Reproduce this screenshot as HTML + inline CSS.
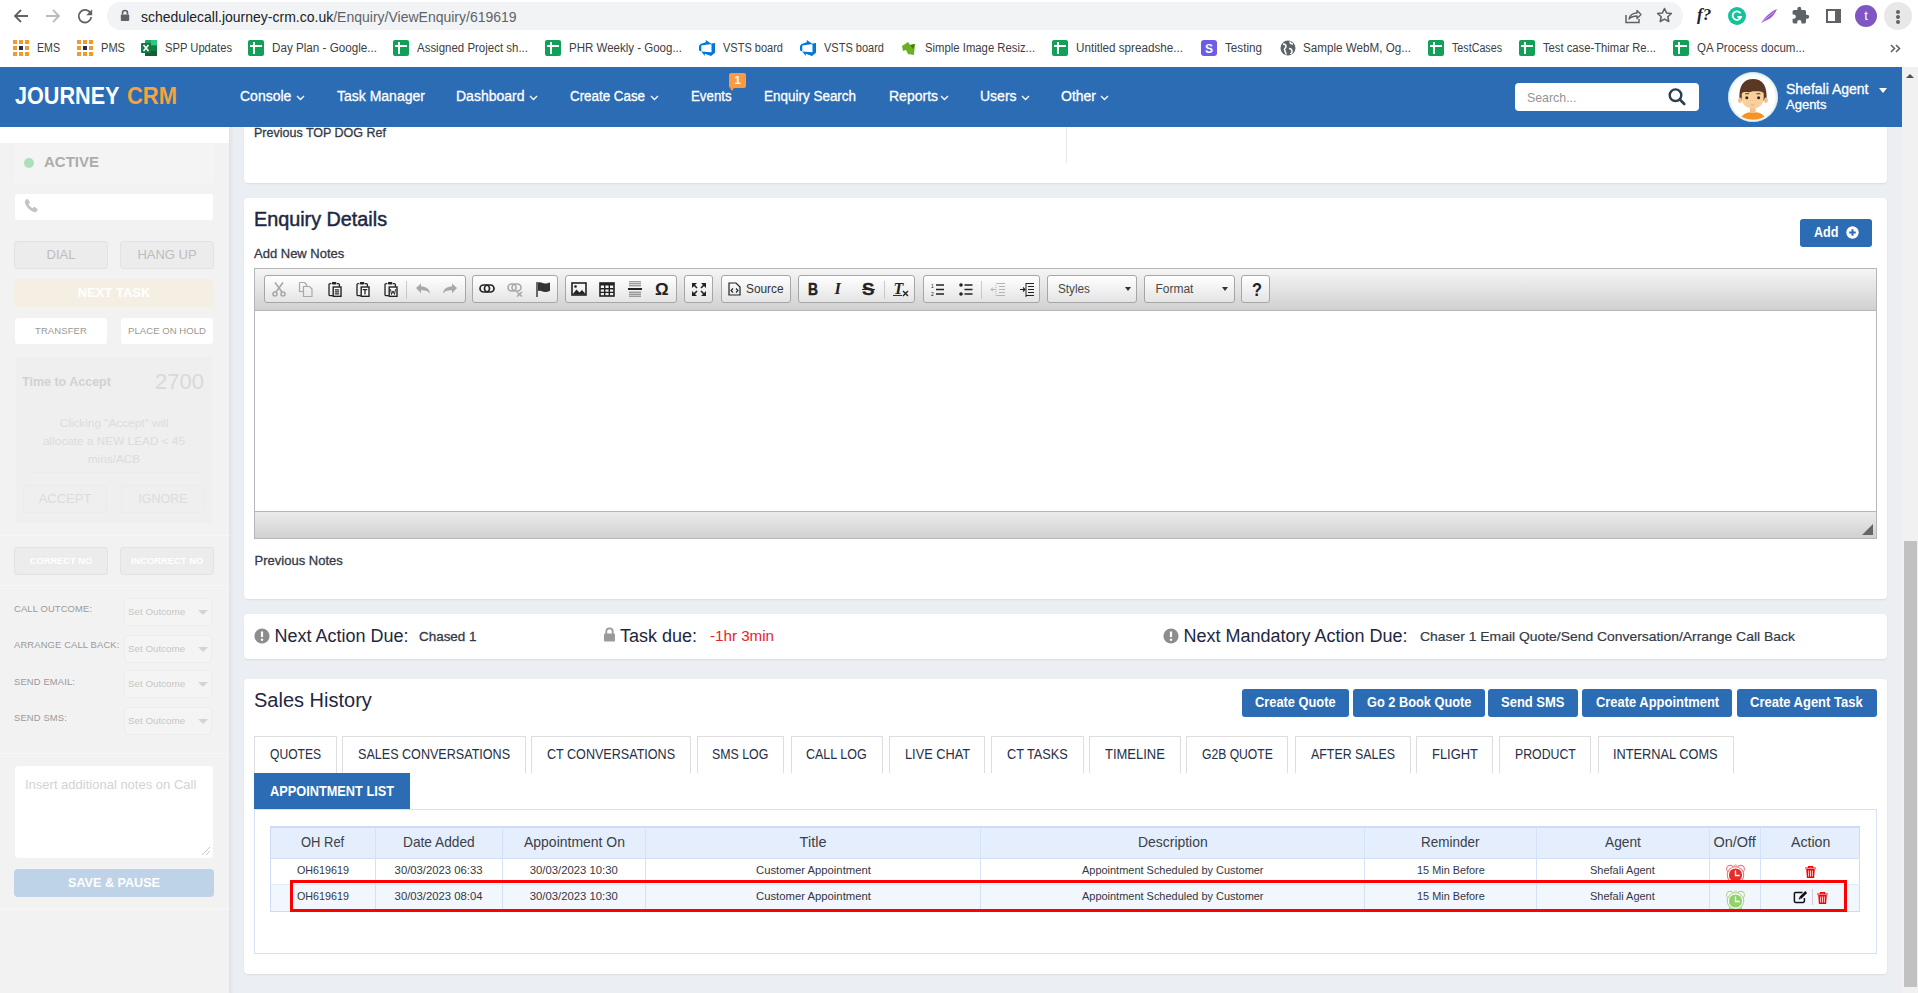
<!DOCTYPE html>
<html><head><meta charset="utf-8">
<style>
*{box-sizing:border-box;margin:0;padding:0}
html,body{width:1918px;height:993px;overflow:hidden;background:#ebeef3;font-family:"Liberation Sans",sans-serif;position:relative}
.abs{position:absolute}
#chrome{left:0;top:0;width:1918px;height:33px;background:#fff}
#bm{left:0;top:33px;width:1918px;height:34px;background:#fff}
.bmt{top:7px;font-size:12px;line-height:16px;color:#3c4043;white-space:nowrap;transform-origin:left center}
#nav{left:0;top:67px;width:1902px;height:60px;background:#2b6cb4}
.nvt{top:21px;font-size:14px;line-height:17px;color:#fff;white-space:nowrap;-webkit-text-stroke:.3px #fff}
.chev{top:28px}
#sb{left:1902px;top:67px;width:16px;height:926px;background:#f1f1f1}
#side{left:0;top:127px;width:229px;height:866px;background:#f2f2f2}
#sideshadow{left:229px;top:127px;width:5px;height:866px;background:linear-gradient(to right,#dfe2e7,#ebeef3)}
.card{position:absolute;left:244px;width:1643px;background:#fff;border-radius:4px;box-shadow:0 1px 2px rgba(0,0,0,.08)}
.sbtn{background:#ececec;border:1px solid #e2e2e2;border-radius:3px;color:#bdbdbd;text-align:center;line-height:26px}
.slbl{left:14px;font-size:9.4px;line-height:12px;color:#9a9a9a;letter-spacing:.15px;white-space:nowrap}
.ssel{left:124px;width:88px;height:28px;background:#f4f4f4;border:1px solid #ededed;border-radius:3px;font-size:9.8px;line-height:26px;color:#c7c7c7;padding-left:3px}
.ssel:after{content:"";position:absolute;left:73px;top:11px;border-left:5px solid transparent;border-right:5px solid transparent;border-top:5px solid #d4d4d4}
.t{white-space:nowrap;transform-origin:left center}
.tbg{border:1px solid #a6a6a6;border-radius:3px;background:linear-gradient(#fff,#e4e4e4)}
</style></head><body>
<div id="side" class="abs">
 <div class="abs" style="left:0;top:0;width:229px;height:16px;background:#fff"></div>
 <div class="abs" style="left:14px;top:16px;width:200px;height:40px;background:#f4f4f4"></div>
 <div class="abs" style="left:24px;top:31px;width:10px;height:10px;border-radius:50%;background:#ace0bb"></div>
 <div class="abs" style="left:44px;top:25.5px;font-size:15px;line-height:18px;font-weight:700;color:#acacac">ACTIVE</div>
 <div class="abs" style="left:15px;top:67px;width:198px;height:26px;background:#fff;border-radius:3px"></div>
 <svg class="abs" style="left:23px;top:71px" width="16" height="16" viewBox="0 0 16 16"><path d="M3.6 1.2c.5-.3 1.1-.2 1.5.3l1.6 2.3c.3.5.2 1.1-.2 1.4l-1 .8c.8 1.8 2.3 3.4 4.2 4.3l.8-1c.4-.4 1-.5 1.4-.2l2.3 1.6c.5.3.6 1 .3 1.5l-.9 1.3c-.5.7-1.4 1-2.3.7C7 13 3 9 1.9 4.5c-.2-.8 0-1.7.7-2.2z" fill="#c4c4c4"/></svg>
 <div class="abs sbtn" style="left:14px;top:114px;width:94px;height:28px"><span style="font-size:13px;position:relative;top:-1px">DIAL</span></div>
 <div class="abs sbtn" style="left:120px;top:114px;width:94px;height:28px"><span style="font-size:13px;position:relative;top:-1px">HANG UP</span></div>
 <div class="abs" style="left:14px;top:152px;width:200px;height:28px;background:#f5efe3;border-radius:3px;color:#fff;font-weight:700;font-size:13px;line-height:28px;text-align:center">NEXT TASK</div>
 <div class="abs" style="left:15px;top:191px;width:92px;height:26px;background:#fff;border-radius:3px;color:#999;font-size:9.5px;line-height:26px;text-align:center;letter-spacing:.1px">TRANSFER</div>
 <div class="abs" style="left:121px;top:191px;width:92px;height:26px;background:#fff;border-radius:3px;color:#999;font-size:9.6px;line-height:26px;text-align:center">PLACE ON HOLD</div>
 <div class="abs" style="left:16px;top:230px;width:196px;height:166px;background:#efefef">
  <div class="abs" style="left:6px;top:16.5px;font-size:12.5px;line-height:16px;font-weight:700;color:#d2d2d2">Time to Accept</div>
  <div class="abs" style="left:139px;top:12.5px;font-size:22px;line-height:24px;color:#d9d9d9">2700</div>
  <div class="abs" style="left:12px;top:56px;width:178px;height:60px;border-bottom:1px solid #ececec;border-right:1px solid #ededed"></div>
  <div class="abs" style="left:0;top:57px;width:196px;font-size:11.8px;line-height:18px;color:#dcdcdc;text-align:center">Clicking "Accept" will<br>allocate a NEW LEAD &lt; 45<br>mins/ACB</div>
  <div class="abs" style="left:7px;top:128px;width:84px;height:28px;border:1px solid #ebebeb;border-radius:3px;color:#dcdcdc;font-size:13px;line-height:26px;text-align:center">ACCEPT</div>
  <div class="abs" style="left:105px;top:128px;width:84px;height:28px;border:1px solid #ebebeb;border-radius:3px;color:#dcdcdc;font-size:12.5px;line-height:26px;text-align:center">IGNORE</div>
 </div>
 <div class="abs" style="left:0;top:408px;width:229px;height:1px;background:#f6f6f6"></div>
 <div class="abs sbtn" style="left:14px;top:420px;width:94px;height:28px"><span style="font-size:9.3px;font-weight:700;color:#fff;position:relative;top:-2px">CORRECT NO</span></div>
 <div class="abs sbtn" style="left:120px;top:420px;width:94px;height:28px"><span style="font-size:9.4px;font-weight:700;color:#fff;position:relative;top:-2px">INCORRECT NO</span></div>
 <div class="abs" style="left:0;top:458px;width:229px;height:1px;background:#f6f6f6"></div>
 <div class="abs slbl" style="top:476px">CALL OUTCOME:</div>
 <div class="abs ssel" style="top:471px">Set Outcome</div>
 <div class="abs slbl" style="top:512px">ARRANGE CALL BACK:</div>
 <div class="abs ssel" style="top:508px">Set Outcome</div>
 <div class="abs slbl" style="top:549px">SEND EMAIL:</div>
 <div class="abs ssel" style="top:543px">Set Outcome</div>
 <div class="abs slbl" style="top:585px">SEND SMS:</div>
 <div class="abs ssel" style="top:580px">Set Outcome</div>
 <div class="abs" style="left:0;top:626px;width:229px;height:1px;background:#f6f6f6"></div>
 <div class="abs" style="left:15px;top:639px;width:198px;height:92px;background:#fff;border-radius:3px">
  <div class="abs" style="left:10px;top:11px;font-size:13px;line-height:16px;color:#d3d3d3;white-space:nowrap">Insert additional notes on Call</div>
  <svg class="abs" style="left:186px;top:80px" width="10" height="10" viewBox="0 0 10 10"><path d="M9 1L1 9M9 5L5 9" stroke="#c8c8c8" stroke-width="1"/></svg>
 </div>
 <div class="abs" style="left:14px;top:742px;width:200px;height:28px;background:#bed2e8;border-radius:4px;color:#fff;font-weight:700;font-size:12.6px;line-height:28px;text-align:center">SAVE &amp; PAUSE</div>
 <div class="abs" style="left:0;top:781px;width:229px;height:2px;background:#f5f5f5"></div>
</div>
<div id="sideshadow" class="abs"></div>
<div class="card" style="top:100px;height:83px"></div>
<div class="abs" style="left:1066px;top:127px;width:1px;height:36px;background:#e6eaf0"></div>
<div class="abs t" style="left:254.0px;top:127.4px;font-size:12.5px;line-height:12.5px;color:#333a48;-webkit-text-stroke:.3px currentColor;">Previous TOP DOG Ref</div>
<div class="card" style="top:198px;height:400.7px"></div>
<div class="abs t" style="left:254.0px;top:209.4px;font-size:20px;line-height:20px;color:#1d2741;transform:scaleX(0.989);-webkit-text-stroke:.45px currentColor;">Enquiry Details</div>
<div class="abs t" style="left:254.0px;top:246.9px;font-size:13px;line-height:13px;color:#333a48;-webkit-text-stroke:.3px currentColor;">Add New Notes</div>
<div class="abs" style="left:1800px;top:219px;width:72px;height:28px;background:#2b6cb4;border-radius:3px"></div>
<div class="abs t" style="left:1813.5px;top:225.1px;font-size:14px;line-height:14px;font-weight:700;color:#fff;transform:scaleX(0.900);">Add</div>
<svg class="abs" style="left:1846px;top:226px" width="13" height="13" viewBox="0 0 13 13"><circle cx="6.5" cy="6.5" r="6.2" fill="#fff"/><path d="M6.5 3.2v6.6M3.2 6.5h6.6" stroke="#2b6cb4" stroke-width="2"/></svg>
<div class="abs" style="left:254px;top:268px;width:1623px;height:271px;border:1px solid #b6b6b6;background:#fff"></div>
<div class="abs" style="left:255px;top:269px;width:1621px;height:42px;background:linear-gradient(#f5f5f5,#cfd1cf);border-bottom:1px solid #b6b6b6"></div>
<div class="abs" style="left:255px;top:511px;width:1621px;height:27px;background:linear-gradient(#ebebeb,#cfd1cf);border-top:1px solid #b6b6b6"></div>
<svg class="abs" style="left:1862px;top:524px" width="11" height="11" viewBox="0 0 11 11"><path d="M11 0V11H0z" fill="#666"/></svg>
<div class="abs tbg" style="left:263.5px;top:275px;width:202.0px;height:27.5px"></div>
<div class="abs tbg" style="left:472.3px;top:275px;width:85.30000000000001px;height:27.5px"></div>
<div class="abs tbg" style="left:564.8px;top:275px;width:112.70000000000005px;height:27.5px"></div>
<div class="abs tbg" style="left:684.4px;top:275px;width:29.100000000000023px;height:27.5px"></div>
<div class="abs tbg" style="left:720.5px;top:275px;width:70.20000000000005px;height:27.5px"></div>
<div class="abs tbg" style="left:797.6px;top:275px;width:117.79999999999995px;height:27.5px"></div>
<div class="abs tbg" style="left:922.7px;top:275px;width:117.5px;height:27.5px"></div>
<div class="abs tbg" style="left:1047.4px;top:275px;width:90.09999999999991px;height:27.5px"></div>
<div class="abs tbg" style="left:1144.3px;top:275px;width:90.29999999999995px;height:27.5px"></div>
<div class="abs tbg" style="left:1241.4px;top:275px;width:29.0px;height:27.5px"></div>
<div class="abs" style="left:406px;top:281px;width:1px;height:18px;background:#c8c8c8"></div>
<div class="abs" style="left:884px;top:281px;width:1px;height:18px;background:#c8c8c8"></div>
<div class="abs" style="left:981px;top:281px;width:1px;height:18px;background:#c8c8c8"></div>
<svg class="abs" style="left:271px;top:281px" width="16" height="16" viewBox="0 0 16 16"><g fill="none" stroke="#a8a8a8" stroke-width="1.6"><circle cx="4" cy="13" r="2"/><circle cx="12" cy="13" r="2"/><path d="M5 11L12 1.5M11 11L4 1.5"/></g></svg>
<svg class="abs" style="left:298px;top:281px" width="16" height="16" viewBox="0 0 16 16"><g fill="none" stroke="#a8a8a8" stroke-width="1.2"><path d="M1.5 1.5h5l2 2V6M1.5 1.5v9H5"/><path d="M5.5 5.5h6l2.5 2.5v7.5H5.5z"/></g></svg>
<svg class="abs" style="left:327.5px;top:280.5px" width="14" height="16" viewBox="0 0 14 16"><g fill="none" stroke="#222" stroke-width="1.3"><path d="M3.2 2.6H2.2Q1 2.6 1 3.8v9.6q0 1.2 1.2 1.2h2.6"/><path d="M8.8 2.6h1.4q1.2 0 1.2 1.2v2"/></g><rect x="3.8" y="1" width="4.6" height="2.4" rx="1" fill="#222"/><rect x="5.2" y="6" width="7.8" height="9.3" fill="#fff" stroke="#222" stroke-width="1.4"/><path d="M6.8 8.9h4.4M6.8 10.9h4.4M6.8 12.9h4.4" stroke="#222" stroke-width="1.1"/></svg>
<svg class="abs" style="left:355.5px;top:280.5px" width="14" height="16" viewBox="0 0 14 16"><g fill="none" stroke="#222" stroke-width="1.3"><path d="M3.2 2.6H2.2Q1 2.6 1 3.8v9.6q0 1.2 1.2 1.2h2.6"/><path d="M8.8 2.6h1.4q1.2 0 1.2 1.2v2"/></g><rect x="3.8" y="1" width="4.6" height="2.4" rx="1" fill="#222"/><rect x="5.2" y="6" width="7.8" height="9.3" fill="#fff" stroke="#222" stroke-width="1.4"/><path d="M6.7 8.6h4.6M9 8.6v5" stroke="#222" stroke-width="1.3"/></svg>
<svg class="abs" style="left:383.5px;top:280.5px" width="14" height="16" viewBox="0 0 14 16"><g fill="none" stroke="#222" stroke-width="1.3"><path d="M3.2 2.6H2.2Q1 2.6 1 3.8v9.6q0 1.2 1.2 1.2h2.6"/><path d="M8.8 2.6h1.4q1.2 0 1.2 1.2v2"/></g><rect x="3.8" y="1" width="4.6" height="2.4" rx="1" fill="#222"/><rect x="5.2" y="6" width="7.8" height="9.3" fill="#fff" stroke="#222" stroke-width="1.4"/><path d="M6.5 8.2l1 5.3 1.5-3.6 1.5 3.6 1-5.3" fill="none" stroke="#222" stroke-width="1"/></svg>
<svg class="abs" style="left:415px;top:283px" width="16" height="12" viewBox="0 0 16 12"><path d="M1 5l5-4.5v3c5 0 8.5 2 9 7.5-1.5-2.8-4-3.8-9-3.8v3z" fill="#a8a8a8"/></svg>
<svg class="abs" style="left:442px;top:283px" width="16" height="12" viewBox="0 0 16 12"><path d="M15 5l-5-4.5v3c-5 0-8.5 2-9 7.5 1.5-2.8 4-3.8 9-3.8v3z" fill="#a8a8a8"/></svg>
<svg class="abs" style="left:479px;top:283.5px" width="16" height="9" viewBox="0 0 16 9"><g fill="none" stroke="#222" stroke-width="1.7"><rect x="1" y="1" width="9.5" height="7" rx="3.5"/><rect x="5.5" y="1" width="9.5" height="7" rx="3.5"/></g></svg>
<svg class="abs" style="left:507px;top:283px" width="16" height="14" viewBox="0 0 16 14"><g fill="none" stroke="#a8a8a8" stroke-width="1.6"><rect x="1" y="1" width="8" height="7" rx="3.5"/><rect x="5" y="1" width="9" height="7" rx="3.5"/><path d="M10 9l5 4.5M15 9l-5 4.5"/></g></svg>
<svg class="abs" style="left:536px;top:281px" width="15" height="16" viewBox="0 0 15 16"><path d="M1 1v15" stroke="#222" stroke-width="1.3"/><path d="M2 1.5c3-1 5 1 7 1s3-.5 5-1v8.5c-2 .5-3 1-5 1s-4-2-7-1z" fill="#333"/></svg>
<svg class="abs" style="left:571px;top:282px" width="16" height="14" viewBox="0 0 16 14"><rect x="1" y="1" width="14" height="12" fill="none" stroke="#222" stroke-width="1.6"/><circle cx="4.5" cy="4.5" r="1.3" fill="#222"/><path d="M1.5 12.5l4-5 3 3 2.5-2.5 4 4.5z" fill="#222"/></svg>
<svg class="abs" style="left:599px;top:282px" width="16" height="15" viewBox="0 0 16 15"><rect x="1" y="1" width="14" height="13" fill="none" stroke="#222" stroke-width="1.6"/><rect x="1" y="1" width="14" height="2.5" fill="#222"/><path d="M5.7 3v11M10.3 3v11M1 6.8h14M1 10.4h14" stroke="#222" stroke-width="1.4"/></svg>
<svg class="abs" style="left:627px;top:281px" width="16" height="16" viewBox="0 0 16 16"><path d="M2 .8h12M2 2.8h12M2 4.8h12M2 11.2h12M2 13.2h12M2 15.2h12" stroke="#444" stroke-width=".7"/><path d="M1 8h14" stroke="#222" stroke-width="2"/></svg>
<div class="abs" style="left:655px;top:280px;font-weight:700;font-size:17px;line-height:20px;color:#222">&Omega;</div>
<svg class="abs" style="left:691px;top:282px" width="16" height="15" viewBox="0 0 16 15"><g fill="none" stroke="#222" stroke-width="1.6"><path d="M1.5 1.5l4.5 4.5M14.5 1.5L10 6M1.5 13.5L6 9M14.5 13.5L10 9"/></g><path d="M1 1h5L1 6zM15 1h-5l5 5zM1 14h5l-5-5zM15 14h-5l5-5z" fill="#222"/></svg>
<svg class="abs" style="left:728px;top:282px" width="13" height="14" viewBox="0 0 13 14"><path d="M1 1h7l4 4v8H1z" fill="none" stroke="#222" stroke-width="1.2"/><path d="M5 6.5l-2 2 2 2M8 6.5l2 2-2 2" fill="none" stroke="#222" stroke-width="1.1"/></svg>
<div class="abs t" style="left:746.3px;top:282.8px;font-size:12px;line-height:12px;color:#333;transform:scaleX(0.986);">Source</div>
<div class="abs t" style="left:807.5px;top:280.8px;font-size:16.5px;line-height:16.5px;font-weight:700;color:#222;transform:scaleX(0.839);-webkit-text-stroke:.4px currentColor;">B</div>
<div class="abs t" style="left:834.5px;top:280.8px;font-size:16.5px;line-height:16.5px;font-weight:700;color:#222;font-style:italic;font-family:'Liberation Serif',serif;">I</div>
<div class="abs t" style="left:862.0px;top:280.8px;font-size:16.5px;line-height:16.5px;font-weight:700;color:#222;transform:scaleX(1.135);-webkit-text-stroke:.3px currentColor;">S</div>
<div class="abs" style="left:861.5px;top:289px;width:13px;height:1.3px;background:#222"></div>
<div class="abs t" style="left:893.5px;top:281.1px;font-size:16px;line-height:16px;font-weight:700;color:#222;font-style:italic;font-family:'Liberation Serif',serif;">T</div>
<div class="abs" style="left:893px;top:294.5px;width:9px;height:1.3px;background:#333"></div>
<svg class="abs" style="left:902px;top:290px" width="7" height="7" viewBox="0 0 7 7"><path d="M1 1l5 5M6 1L1 6" stroke="#222" stroke-width="1.4"/></svg>
<svg class="abs" style="left:931px;top:283px" width="13" height="13" viewBox="0 0 13 13"><path d="M5 2h8M5 6.5h8M5 11h8" stroke="#222" stroke-width="1.6"/><text x="0" y="5" font-size="5" font-family="Liberation Sans" fill="#222">1</text><text x="0" y="12.5" font-size="5" font-family="Liberation Sans" fill="#222">2</text></svg>
<svg class="abs" style="left:959px;top:283px" width="14" height="13" viewBox="0 0 14 13"><path d="M5.5 2h8M5.5 6.5h8M5.5 11h8" stroke="#222" stroke-width="1.6"/><circle cx="2" cy="2" r="1.8" fill="#222"/><circle cx="2" cy="11" r="1.8" fill="#222"/></svg>
<svg class="abs" style="left:990px;top:282px" width="15" height="15" viewBox="0 0 15 15"><path d="M7 1.5h8M9 4.5h6M9 7.5h6M9 10.5h6M7 13.5h8" stroke="#b4b4b4" stroke-width="1"/><path d="M1 7.5h5M3 5.5l-2 2 2 2" fill="none" stroke="#b4b4b4" stroke-width="1"/><path d="M6 1v13" stroke="#b4b4b4" stroke-dasharray="1 1"/></svg>
<svg class="abs" style="left:1019px;top:282px" width="15" height="15" viewBox="0 0 15 15"><path d="M7 1.5h8M9 4.5h6M9 7.5h6M9 10.5h6M7 13.5h8" stroke="#222" stroke-width="1.2"/><path d="M1 7.5h5M4 5.5l2 2-2 2" fill="none" stroke="#222" stroke-width="1.1"/><path d="M7 1v14" stroke="#222" stroke-width="1"/></svg>
<div class="abs t" style="left:1058.2px;top:282.6px;font-size:12px;line-height:12px;color:#484848;transform:scaleX(0.979);">Styles</div>
<svg class="abs" style="left:1125px;top:287px" width="6" height="4" viewBox="0 0 6 4"><path d="M0 0h6L3 4z" fill="#333"/></svg>
<div class="abs t" style="left:1155.4px;top:282.6px;font-size:12px;line-height:12px;color:#484848;">Format</div>
<svg class="abs" style="left:1222px;top:287px" width="6" height="4" viewBox="0 0 6 4"><path d="M0 0h6L3 4z" fill="#333"/></svg>
<div class="abs t" style="left:1251.5px;top:280.7px;font-size:18px;line-height:18px;font-weight:700;color:#222;transform:scaleX(0.909);">?</div>
<div class="abs t" style="left:254.6px;top:553.8px;font-size:13px;line-height:13px;color:#333a48;-webkit-text-stroke:.3px currentColor;">Previous Notes</div>
<div class="card" style="top:614px;height:45px"></div>
<svg class="abs" style="left:254px;top:628px" width="16" height="16" viewBox="0 0 16 16"><circle cx="8" cy="8" r="7.6" fill="#8d8d8d"/><path d="M8 3.5v5.5" stroke="#fff" stroke-width="2.2"/><circle cx="8" cy="11.8" r="1.2" fill="#fff"/></svg>
<div class="abs t" style="left:274.4px;top:627.0px;font-size:18px;line-height:18px;color:#1d2741;">Next Action Due:</div>
<div class="abs t" style="left:419.0px;top:630.0px;font-size:13px;line-height:13px;color:#333a48;transform:scaleX(1.033);-webkit-text-stroke:.3px currentColor;">Chased 1</div>
<svg class="abs" style="left:603px;top:627px" width="13" height="15" viewBox="0 0 13 15"><path d="M3.3 7V4.5a3.2 3.2 0 0 1 6.4 0V7" fill="none" stroke="#9a9a9a" stroke-width="1.8"/><rect x="1" y="6.5" width="11" height="8" rx="1" fill="#9a9a9a"/></svg>
<div class="abs t" style="left:620.0px;top:627.0px;font-size:18px;line-height:18px;color:#1d2741;">Task due:</div>
<div class="abs t" style="left:709.8px;top:629.2px;font-size:14.5px;line-height:14.5px;color:#e8202f;transform:scaleX(1.045);">-1hr 3min</div>
<svg class="abs" style="left:1163px;top:628px" width="16" height="16" viewBox="0 0 16 16"><circle cx="8" cy="8" r="7.6" fill="#8d8d8d"/><path d="M8 3.5v5.5" stroke="#fff" stroke-width="2.2"/><circle cx="8" cy="11.8" r="1.2" fill="#fff"/></svg>
<div class="abs t" style="left:1183.5px;top:627.0px;font-size:18px;line-height:18px;color:#1d2741;">Next Mandatory Action Due:</div>
<div class="abs t" style="left:1419.5px;top:630.0px;font-size:13.5px;line-height:13.5px;color:#333a48;transform:scaleX(1.030);-webkit-text-stroke:.2px currentColor;">Chaser 1 Email Quote/Send Conversation/Arrange Call Back</div>
<div class="card" style="top:679px;height:295px"></div>
<div class="abs t" style="left:254.0px;top:690.3px;font-size:20px;line-height:20px;color:#1d2741;">Sales History</div>
<div class="abs" style="left:1241.8px;top:688.8px;width:107.6px;height:28px;background:#2b6cb4;border-radius:3px"></div>
<div class="abs t" style="left:1255.3px;top:695.3px;font-size:14.5px;line-height:14.5px;font-weight:700;color:#fff;transform:scaleX(0.885);">Create Quote</div>
<div class="abs" style="left:1353.2px;top:688.8px;width:131.4px;height:28px;background:#2b6cb4;border-radius:3px"></div>
<div class="abs t" style="left:1366.7px;top:695.3px;font-size:14.5px;line-height:14.5px;font-weight:700;color:#fff;transform:scaleX(0.882);">Go 2 Book Quote</div>
<div class="abs" style="left:1487.9px;top:688.8px;width:90.5px;height:28px;background:#2b6cb4;border-radius:3px"></div>
<div class="abs t" style="left:1501.4px;top:695.3px;font-size:14.5px;line-height:14.5px;font-weight:700;color:#fff;transform:scaleX(0.896);">Send SMS</div>
<div class="abs" style="left:1582.2px;top:688.8px;width:150.1px;height:28px;background:#2b6cb4;border-radius:3px"></div>
<div class="abs t" style="left:1595.7px;top:695.3px;font-size:14.5px;line-height:14.5px;font-weight:700;color:#fff;transform:scaleX(0.892);">Create Appointment</div>
<div class="abs" style="left:1736.9px;top:688.8px;width:139.7px;height:28px;background:#2b6cb4;border-radius:3px"></div>
<div class="abs t" style="left:1750.4px;top:695.3px;font-size:14.5px;line-height:14.5px;font-weight:700;color:#fff;transform:scaleX(0.896);">Create Agent Task</div>
<div class="abs" style="left:254.2px;top:736.3px;width:82.6px;height:37px;border:1px solid #dedede;border-bottom:none;background:#fff"></div>
<div class="abs t" style="left:269.9px;top:747.0px;font-size:14.5px;line-height:14.5px;color:#253047;transform:scaleX(0.834);">QUOTES</div>
<div class="abs" style="left:342.2px;top:736.3px;width:183.5px;height:37px;border:1px solid #dedede;border-bottom:none;background:#fff"></div>
<div class="abs t" style="left:358.0px;top:747.0px;font-size:14.5px;line-height:14.5px;color:#253047;transform:scaleX(0.867);">SALES CONVERSATIONS</div>
<div class="abs" style="left:531px;top:736.3px;width:159.6px;height:37px;border:1px solid #dedede;border-bottom:none;background:#fff"></div>
<div class="abs t" style="left:546.8px;top:747.0px;font-size:14.5px;line-height:14.5px;color:#253047;transform:scaleX(0.867);">CT CONVERSATIONS</div>
<div class="abs" style="left:696.6px;top:736.3px;width:87.8px;height:37px;border:1px solid #dedede;border-bottom:none;background:#fff"></div>
<div class="abs t" style="left:712.4px;top:747.0px;font-size:14.5px;line-height:14.5px;color:#253047;transform:scaleX(0.852);">SMS LOG</div>
<div class="abs" style="left:790.6px;top:736.3px;width:92.2px;height:37px;border:1px solid #dedede;border-bottom:none;background:#fff"></div>
<div class="abs t" style="left:806.4px;top:747.0px;font-size:14.5px;line-height:14.5px;color:#253047;transform:scaleX(0.862);">CALL LOG</div>
<div class="abs" style="left:888.8px;top:736.3px;width:96.6px;height:37px;border:1px solid #dedede;border-bottom:none;background:#fff"></div>
<div class="abs t" style="left:904.5px;top:747.0px;font-size:14.5px;line-height:14.5px;color:#253047;transform:scaleX(0.881);">LIVE CHAT</div>
<div class="abs" style="left:991.3px;top:736.3px;width:92.3px;height:37px;border:1px solid #dedede;border-bottom:none;background:#fff"></div>
<div class="abs t" style="left:1007.0px;top:747.0px;font-size:14.5px;line-height:14.5px;color:#253047;transform:scaleX(0.877);">CT TASKS</div>
<div class="abs" style="left:1089.2px;top:736.3px;width:91.4px;height:37px;border:1px solid #dedede;border-bottom:none;background:#fff"></div>
<div class="abs t" style="left:1105.0px;top:747.0px;font-size:14.5px;line-height:14.5px;color:#253047;transform:scaleX(0.896);">TIMELINE</div>
<div class="abs" style="left:1186.2px;top:736.3px;width:102.3px;height:37px;border:1px solid #dedede;border-bottom:none;background:#fff"></div>
<div class="abs t" style="left:1201.9px;top:747.0px;font-size:14.5px;line-height:14.5px;color:#253047;transform:scaleX(0.837);">G2B QUOTE</div>
<div class="abs" style="left:1295px;top:736.3px;width:115.5px;height:37px;border:1px solid #dedede;border-bottom:none;background:#fff"></div>
<div class="abs t" style="left:1310.8px;top:747.0px;font-size:14.5px;line-height:14.5px;color:#253047;transform:scaleX(0.854);">AFTER SALES</div>
<div class="abs" style="left:1416px;top:736.3px;width:77.4px;height:37px;border:1px solid #dedede;border-bottom:none;background:#fff"></div>
<div class="abs t" style="left:1431.8px;top:747.0px;font-size:14.5px;line-height:14.5px;color:#253047;transform:scaleX(0.890);">FLIGHT</div>
<div class="abs" style="left:1499px;top:736.3px;width:92.4px;height:37px;border:1px solid #dedede;border-bottom:none;background:#fff"></div>
<div class="abs t" style="left:1514.8px;top:747.0px;font-size:14.5px;line-height:14.5px;color:#253047;transform:scaleX(0.849);">PRODUCT</div>
<div class="abs" style="left:1597.5px;top:736.3px;width:136.1px;height:37px;border:1px solid #dedede;border-bottom:none;background:#fff"></div>
<div class="abs t" style="left:1613.2px;top:747.0px;font-size:14.5px;line-height:14.5px;color:#253047;transform:scaleX(0.881);">INTERNAL COMS</div>
<div class="abs" style="left:254.2px;top:773px;width:155.8px;height:36px;background:#2b6cb4"></div>
<div class="abs t" style="left:270.4px;top:784.1px;font-size:14.5px;line-height:14.5px;font-weight:700;color:#fff;transform:scaleX(0.880);">APPOINTMENT LIST</div>
<div class="abs" style="left:254px;top:809px;width:1623px;height:145px;border:1px solid #d3e2f6"></div>
<div class="abs" style="left:270.2px;top:826px;width:1590.2px;height:32.6px;background:#e4eefc"></div>
<div class="abs" style="left:270.2px;top:858.6px;width:1590.2px;height:26px;background:#fff"></div>
<div class="abs" style="left:270.2px;top:884.6px;width:1590.2px;height:27px;background:#f2f6fd"></div>
<div class="abs" style="left:270.2px;top:826px;width:1590.2px;height:86px;border:1px solid #cadcf6;border-top-width:2px"></div>
<div class="abs" style="left:374.6px;top:827px;width:1px;height:84px;background:#d3e2f7"></div>
<div class="abs" style="left:501.8px;top:827px;width:1px;height:84px;background:#d3e2f7"></div>
<div class="abs" style="left:645.1px;top:827px;width:1px;height:84px;background:#d3e2f7"></div>
<div class="abs" style="left:979.7px;top:827px;width:1px;height:84px;background:#d3e2f7"></div>
<div class="abs" style="left:1364.0px;top:827px;width:1px;height:84px;background:#d3e2f7"></div>
<div class="abs" style="left:1535.8px;top:827px;width:1px;height:84px;background:#d3e2f7"></div>
<div class="abs" style="left:1708.6px;top:827px;width:1px;height:84px;background:#d3e2f7"></div>
<div class="abs" style="left:1759.7px;top:827px;width:1px;height:84px;background:#d3e2f7"></div>
<div class="abs" style="left:270.2px;top:858px;width:1590.2px;height:1px;background:#cfdff6"></div>
<div class="abs" style="left:270.2px;top:884px;width:1590.2px;height:1px;background:#e1ebf9"></div>
<div class="abs t" style="left:301.0px;top:834.8px;font-size:14.5px;line-height:14.5px;color:#3b3f48;transform:scaleX(0.894);">OH Ref</div>
<div class="abs t" style="left:402.9px;top:834.8px;font-size:14.5px;line-height:14.5px;color:#3b3f48;transform:scaleX(0.945);">Date Added</div>
<div class="abs t" style="left:523.5px;top:834.8px;font-size:14.5px;line-height:14.5px;color:#3b3f48;transform:scaleX(0.964);">Appointment On</div>
<div class="abs t" style="left:799.6px;top:834.8px;font-size:14.5px;line-height:14.5px;color:#3b3f48;">Title</div>
<div class="abs t" style="left:1137.5px;top:834.8px;font-size:14.5px;line-height:14.5px;color:#3b3f48;transform:scaleX(0.961);">Description</div>
<div class="abs t" style="left:1421.2px;top:834.8px;font-size:14.5px;line-height:14.5px;color:#3b3f48;transform:scaleX(0.929);">Reminder</div>
<div class="abs t" style="left:1604.7px;top:834.8px;font-size:14.5px;line-height:14.5px;color:#3b3f48;transform:scaleX(0.947);">Agent</div>
<div class="abs t" style="left:1713.4px;top:834.8px;font-size:14.5px;line-height:14.5px;color:#3b3f48;">On/Off</div>
<div class="abs t" style="left:1790.7px;top:834.8px;font-size:14.5px;line-height:14.5px;color:#3b3f48;transform:scaleX(0.975);">Action</div>
<div class="abs t" style="left:296.7px;top:864.6px;font-size:11.3px;line-height:11.3px;color:#33373f;transform:scaleX(0.950);">OH619619</div>
<div class="abs t" style="left:394.6px;top:864.6px;font-size:11.3px;line-height:11.3px;color:#33373f;">30/03/2023 06:33</div>
<div class="abs t" style="left:529.8px;top:864.6px;font-size:11.3px;line-height:11.3px;color:#33373f;">30/03/2023 10:30</div>
<div class="abs t" style="left:756.0px;top:864.6px;font-size:11.3px;line-height:11.3px;color:#33373f;">Customer Appointment</div>
<div class="abs t" style="left:1081.6px;top:864.6px;font-size:11.3px;line-height:11.3px;color:#33373f;transform:scaleX(0.970);">Appointment Scheduled by Customer</div>
<div class="abs t" style="left:1416.5px;top:864.6px;font-size:11.3px;line-height:11.3px;color:#33373f;transform:scaleX(0.964);">15 Min Before</div>
<div class="abs t" style="left:1590.3px;top:864.6px;font-size:11.3px;line-height:11.3px;color:#33373f;transform:scaleX(0.973);">Shefali Agent</div>
<div class="abs t" style="left:296.7px;top:890.7px;font-size:11.3px;line-height:11.3px;color:#33373f;transform:scaleX(0.950);">OH619619</div>
<div class="abs t" style="left:394.6px;top:890.7px;font-size:11.3px;line-height:11.3px;color:#33373f;">30/03/2023 08:04</div>
<div class="abs t" style="left:529.8px;top:890.7px;font-size:11.3px;line-height:11.3px;color:#33373f;">30/03/2023 10:30</div>
<div class="abs t" style="left:756.0px;top:890.7px;font-size:11.3px;line-height:11.3px;color:#33373f;">Customer Appointment</div>
<div class="abs t" style="left:1081.6px;top:890.7px;font-size:11.3px;line-height:11.3px;color:#33373f;transform:scaleX(0.970);">Appointment Scheduled by Customer</div>
<div class="abs t" style="left:1416.5px;top:890.7px;font-size:11.3px;line-height:11.3px;color:#33373f;transform:scaleX(0.964);">15 Min Before</div>
<div class="abs t" style="left:1590.3px;top:890.7px;font-size:11.3px;line-height:11.3px;color:#33373f;transform:scaleX(0.973);">Shefali Agent</div>
<svg class="abs" style="left:1724.5px;top:863.5px" width="21" height="16.5" viewBox="0 0 21 16.5"><circle cx="5.2" cy="5" r="3.6" fill="#fff" stroke="#ec7b7b" stroke-width="1.1"/><circle cx="15.8" cy="5" r="3.6" fill="#fff" stroke="#ec7b7b" stroke-width="1.1"/><rect x="9" y="1" width="3" height="2" rx="1" fill="#fff" stroke="#ec7b7b" stroke-width=".8"/><path d="M5.5 17.5l-1.5 2M15.5 17.5l1.5 2" stroke="#ec7b7b" stroke-width="1.4"/><circle cx="10.5" cy="11" r="8.2" fill="#fff" stroke="#ec7b7b" stroke-width="1.1"/><circle cx="10.5" cy="11" r="6.6" fill="#e52d2d"/><path d="M10.5 6.5v5h4.2" fill="none" stroke="#fff" stroke-width="1.3"/></svg>
<svg class="abs" style="left:1724.5px;top:889.5px" width="21" height="20" viewBox="0 0 21 20"><circle cx="5.2" cy="5" r="3.6" fill="#fff" stroke="#a6d98a" stroke-width="1.1"/><circle cx="15.8" cy="5" r="3.6" fill="#fff" stroke="#a6d98a" stroke-width="1.1"/><rect x="9" y="1" width="3" height="2" rx="1" fill="#fff" stroke="#a6d98a" stroke-width=".8"/><path d="M5.5 17.5l-1.5 2M15.5 17.5l1.5 2" stroke="#a6d98a" stroke-width="1.4"/><circle cx="10.5" cy="11" r="8.2" fill="#fff" stroke="#a6d98a" stroke-width="1.1"/><circle cx="10.5" cy="11" r="6.6" fill="#94d070"/><path d="M10.5 6.5v5h4.2" fill="none" stroke="#fff" stroke-width="1.3"/></svg>
<svg class="abs" style="left:1805px;top:866px" width="11" height="12" viewBox="0 0 11 12"><path d="M0 2h11M3.5 2V.6h4V2" fill="none" stroke="#ff0000" stroke-width="1.2"/><path d="M1.2 3h8.6l-.7 9H1.9z" fill="#ff0000"/><path d="M3.6 4.5v6M5.5 4.5v6M7.4 4.5v6" stroke="#fff" stroke-width=".8"/></svg>
<svg class="abs" style="left:1816.6px;top:892px" width="11" height="12" viewBox="0 0 11 12"><path d="M0 2h11M3.5 2V.6h4V2" fill="none" stroke="#ff0000" stroke-width="1.2"/><path d="M1.2 3h8.6l-.7 9H1.9z" fill="#ff0000"/><path d="M3.6 4.5v6M5.5 4.5v6M7.4 4.5v6" stroke="#fff" stroke-width=".8"/></svg>
<svg class="abs" style="left:1792.5px;top:891px" width="15" height="12.5" viewBox="0 0 15 12.5"><path d="M9.5 1.4H2.6a1.2 1.2 0 0 0-1.2 1.2v7.6a1.2 1.2 0 0 0 1.2 1.2h7.6a1.2 1.2 0 0 0 1.2-1.2V7" fill="none" stroke="#111" stroke-width="1.5"/><path d="M5.6 8.6l.7-2.5 6-6 1.8 1.8-6 6z" fill="#111"/><path d="M6.4 6.5l1.4 1.4" stroke="#fff" stroke-width=".6"/></svg>
<div class="abs" style="left:1812px;top:889px;width:1px;height:16px;background:#d0d0d0"></div>
<div class="abs" style="left:290px;top:880px;width:1556.6px;height:32px;border:3px solid #ff0000"></div><!-- CHROME TOOLBAR -->
<div id="chrome" class="abs">
 <svg class="abs" style="left:12px;top:7px" width="18" height="18" viewBox="0 0 18 18"><path d="M16 9H3.5M9 3L3 9l6 6" fill="none" stroke="#5f6368" stroke-width="1.8"/></svg>
 <svg class="abs" style="left:44px;top:7px" width="18" height="18" viewBox="0 0 18 18"><path d="M2 9h12.5M9 3l6 6-6 6" fill="none" stroke="#b9bcc1" stroke-width="1.8"/></svg>
 <svg class="abs" style="left:76px;top:7px" width="18" height="18" viewBox="0 0 18 18"><path d="M14.6 6.2A6.3 6.3 0 1 0 15.3 10" fill="none" stroke="#5f6368" stroke-width="1.8"/><path d="M16.2 2.2v6h-6z" fill="#5f6368"/></svg>
 <div class="abs" style="left:107px;top:2px;width:1576px;height:28px;border-radius:14px;background:#f1f3f4"></div>
 <svg class="abs" style="left:120px;top:9px" width="10" height="13" viewBox="0 0 10 13"><path d="M2.5 5.5V4a2.5 2.5 0 0 1 5 0v1.5" fill="none" stroke="#5f6368" stroke-width="1.6"/><rect x="0.8" y="5.5" width="8.4" height="6.5" rx="1" fill="#5f6368"/></svg>
 <div class="abs" style="left:141px;top:7.5px;font-size:14px;line-height:18px;color:#202124;white-space:nowrap">schedulecall.journey-crm.co.uk<span style="color:#5f6368">/Enquiry/ViewEnquiry/619619</span></div>
 <svg class="abs" style="left:1624px;top:8px" width="18" height="16" viewBox="0 0 18 16"><path d="M2 7v7.5h13V11" fill="none" stroke="#5f6368" stroke-width="1.5"/><path d="M5 11c1-4 4-6 8-6V2.5l4 4-4 4V8c-3 0-6 1-8 3z" fill="none" stroke="#5f6368" stroke-width="1.4" stroke-linejoin="round"/></svg>
 <svg class="abs" style="left:1655px;top:6px" width="19" height="19" viewBox="0 0 24 24"><path d="M12 3.2l2.6 5.6 6.1.7-4.5 4.1 1.2 6-5.4-3-5.4 3 1.2-6-4.5-4.1 6.1-.7z" fill="none" stroke="#5f6368" stroke-width="2" stroke-linejoin="round"/></svg>
 <div class="abs" style="left:1697px;top:5px;font-family:'Liberation Serif',serif;font-style:italic;font-weight:700;font-size:17px;line-height:20px;color:#202124">f?</div>
 <div class="abs" style="left:1728px;top:7px;width:18px;height:18px;border-radius:50%;background:#15c39a"></div>
 <svg class="abs" style="left:1731px;top:10px" width="12" height="12" viewBox="0 0 12 12"><path d="M9.5 3.2A4.3 4.3 0 1 0 10 7H6.5" fill="none" stroke="#fff" stroke-width="1.8"/></svg>
 <svg class="abs" style="left:1759px;top:7px" width="20" height="18" viewBox="0 0 20 18"><path d="M2 16C6 10 11 5 18 2c-2 5-6 10-12 12z" fill="#9b59d6"/><path d="M3 15L15 5" stroke="#c9a3ef" stroke-width="1"/></svg>
 <svg class="abs" style="left:1791px;top:6px" width="19" height="19" viewBox="0 0 24 24"><path d="M20.5 11H19V7a2 2 0 0 0-2-2h-4V3.5a2.5 2.5 0 0 0-5 0V5H4a2 2 0 0 0-2 2v3.8h1.5a2.7 2.7 0 0 1 0 5.4H2V20a2 2 0 0 0 2 2h3.8v-1.5a2.7 2.7 0 0 1 5.4 0V22H17a2 2 0 0 0 2-2v-4h1.5a2.5 2.5 0 0 0 0-5z" fill="#5f6368"/></svg>
 <div class="abs" style="left:1826px;top:9px;width:15px;height:14px;border:2px solid #5f6368;border-right-width:6px"></div>
 <div class="abs" style="left:1855px;top:5px;width:22px;height:22px;border-radius:50%;background:#7e57c2;color:#fff;font-size:13px;line-height:22px;text-align:center">t</div>
 <div class="abs" style="left:1884px;top:2px;width:28px;height:28px;border-radius:50%;background:#e8e8e8"></div>
 <div class="abs" style="left:1896px;top:10px;width:4px;height:4px;border-radius:50%;background:#5f6368;box-shadow:0 5px 0 #5f6368,0 10px 0 #5f6368"></div>
</div>
<div id="bm" class="abs">
<svg class="abs" style="left:13px;top:7px" width="16" height="16" viewBox="0 0 16 16"><g fill="#f19a2c"><rect x="0" y="0" width="4" height="4"/><rect x="6" y="0" width="4" height="4"/><rect x="12" y="0" width="4" height="4"/><rect x="0" y="6" width="4" height="4"/><rect x="12" y="6" width="4" height="4"/><rect x="0" y="12" width="4" height="4"/><rect x="6" y="12" width="4" height="4"/><rect x="12" y="12" width="4" height="4"/></g><rect x="6" y="6" width="4" height="4" fill="#1d2b5e"/></svg>
<div class="abs bmt" style="left:37px;transform:scaleX(0.885)">EMS</div>
<svg class="abs" style="left:77px;top:7px" width="16" height="16" viewBox="0 0 16 16"><g fill="#f19a2c"><rect x="0" y="0" width="4" height="4"/><rect x="6" y="0" width="4" height="4"/><rect x="12" y="0" width="4" height="4"/><rect x="0" y="6" width="4" height="4"/><rect x="12" y="6" width="4" height="4"/><rect x="0" y="12" width="4" height="4"/><rect x="6" y="12" width="4" height="4"/><rect x="12" y="12" width="4" height="4"/></g><rect x="6" y="6" width="4" height="4" fill="#1d2b5e"/></svg>
<div class="abs bmt" style="left:101px;transform:scaleX(0.923)">PMS</div>
<svg class="abs" style="left:141px;top:7px" width="16" height="16" viewBox="0 0 16 16"><rect x="4" y="0" width="12" height="16" rx="1" fill="#21a366"/><rect x="4" y="5.3" width="12" height="5.4" fill="#107c41"/><rect x="4" y="10.7" width="12" height="5.3" fill="#185c37"/><rect x="10" y="0" width="6" height="5.3" fill="#33c481"/><rect x="0" y="3" width="10" height="10" rx="1" fill="#107c41"/><path d="M2.5 5l5 6M7.5 5l-5 6" stroke="#fff" stroke-width="1.6"/></svg>
<div class="abs bmt" style="left:165px;transform:scaleX(0.933)">SPP Updates</div>
<svg class="abs" style="left:248px;top:7px" width="16" height="16" viewBox="0 0 16 16"><rect x="0" y="0" width="16" height="16" rx="2" fill="#12a058"/><rect x="2" y="5" width="12" height="2" fill="#fff"/><rect x="5" y="2" width="2" height="12" fill="#fff"/></svg>
<div class="abs bmt" style="left:272px;transform:scaleX(0.971)">Day Plan - Google...</div>
<svg class="abs" style="left:393px;top:7px" width="16" height="16" viewBox="0 0 16 16"><rect x="0" y="0" width="16" height="16" rx="2" fill="#12a058"/><rect x="2" y="5" width="12" height="2" fill="#fff"/><rect x="5" y="2" width="2" height="12" fill="#fff"/></svg>
<div class="abs bmt" style="left:417px;transform:scaleX(0.956)">Assigned Project sh...</div>
<svg class="abs" style="left:545px;top:7px" width="16" height="16" viewBox="0 0 16 16"><rect x="0" y="0" width="16" height="16" rx="2" fill="#12a058"/><rect x="2" y="5" width="12" height="2" fill="#fff"/><rect x="5" y="2" width="2" height="12" fill="#fff"/></svg>
<div class="abs bmt" style="left:569px;transform:scaleX(0.959)">PHR Weekly - Goog...</div>
<svg class="abs" style="left:699px;top:7px" width="16" height="16" viewBox="0 0 16 16"><path d="M16 3v9.8L12 16l-6.2-2.2v2.2L2.3 11.4l10.2.8V3.4zM12.6 3.9L6.8 0v2.3L1.5 3.9 0 5.9v4.6l2.3 1V5.6z" fill="#0078d7"/></svg>
<div class="abs bmt" style="left:723px;transform:scaleX(0.917)">VSTS board</div>
<svg class="abs" style="left:800px;top:7px" width="16" height="16" viewBox="0 0 16 16"><path d="M16 3v9.8L12 16l-6.2-2.2v2.2L2.3 11.4l10.2.8V3.4zM12.6 3.9L6.8 0v2.3L1.5 3.9 0 5.9v4.6l2.3 1V5.6z" fill="#0078d7"/></svg>
<div class="abs bmt" style="left:824px;transform:scaleX(0.917)">VSTS board</div>
<svg class="abs" style="left:901px;top:7px" width="16" height="16" viewBox="0 0 16 16"><path d="M1 6l6-4 2 3 5-1-1 11-6-1-2-4-3 1z" fill="#6ab023"/><path d="M7 2l2 3 5-1-2 5z" fill="#3f7d14"/></svg>
<div class="abs bmt" style="left:925px;transform:scaleX(0.943)">Simple Image Resiz...</div>
<svg class="abs" style="left:1052px;top:7px" width="16" height="16" viewBox="0 0 16 16"><rect x="0" y="0" width="16" height="16" rx="2" fill="#12a058"/><rect x="2" y="5" width="12" height="2" fill="#fff"/><rect x="5" y="2" width="2" height="12" fill="#fff"/></svg>
<div class="abs bmt" style="left:1076px;transform:scaleX(0.972)">Untitled spreadshe...</div>
<svg class="abs" style="left:1201px;top:7px" width="16" height="16" viewBox="0 0 16 16"><rect width="16" height="16" rx="3" fill="#6c5ce7"/><text x="8" y="12.5" font-family="Liberation Sans" font-weight="700" font-size="12" fill="#fff" text-anchor="middle">S</text></svg>
<div class="abs bmt" style="left:1225px;transform:scaleX(0.974)">Testing</div>
<svg class="abs" style="left:1280px;top:7px" width="16" height="16" viewBox="0 0 16 16"><circle cx="8" cy="8" r="7.5" fill="#5f6368"/><path d="M3 4c2 0 3 1 3 2.5S4.5 8 4.5 9.5 6 12 6 14.5M10 1.5c0 2 1.5 2.5 3 2.5M9 8.5c1.5 0 3 1 3 3s-1 2-1.5 2.5" fill="none" stroke="#fff" stroke-width="1.5"/></svg>
<div class="abs bmt" style="left:1303px;transform:scaleX(0.971)">Sample WebM, Og...</div>
<svg class="abs" style="left:1428px;top:7px" width="16" height="16" viewBox="0 0 16 16"><rect x="0" y="0" width="16" height="16" rx="2" fill="#12a058"/><rect x="2" y="5" width="12" height="2" fill="#fff"/><rect x="5" y="2" width="2" height="12" fill="#fff"/></svg>
<div class="abs bmt" style="left:1452px;transform:scaleX(0.893)">TestCases</div>
<svg class="abs" style="left:1519px;top:7px" width="16" height="16" viewBox="0 0 16 16"><rect x="0" y="0" width="16" height="16" rx="2" fill="#12a058"/><rect x="2" y="5" width="12" height="2" fill="#fff"/><rect x="5" y="2" width="2" height="12" fill="#fff"/></svg>
<div class="abs bmt" style="left:1543px;transform:scaleX(0.936)">Test case-Thimar Re...</div>
<svg class="abs" style="left:1673px;top:7px" width="16" height="16" viewBox="0 0 16 16"><rect x="0" y="0" width="16" height="16" rx="2" fill="#12a058"/><rect x="2" y="5" width="12" height="2" fill="#fff"/><rect x="5" y="2" width="2" height="12" fill="#fff"/></svg>
<div class="abs bmt" style="left:1697px;transform:scaleX(0.958)">QA Process docum...</div>
<svg class="abs" style="left:1890px;top:11px" width="11" height="9" viewBox="0 0 11 9"><path d="M1 1l3.5 3.5L1 8M6 1l3.5 3.5L6 8" fill="none" stroke="#5f6368" stroke-width="1.6"/></svg>
</div><div id="nav" class="abs">
 <div class="abs" style="left:14.5px;top:16.9px;font-size:24.5px;line-height:24.5px;font-weight:700;color:#fff;white-space:nowrap;transform:scaleX(.882);transform-origin:left">JOURNEY</div><div class="abs" style="left:127px;top:16.9px;font-size:24.5px;line-height:24.5px;font-weight:700;color:#f7a23c;white-space:nowrap;transform:scaleX(.896);transform-origin:left">CRM</div>
 <div class="abs nvt" style="left:240px">Console</div><svg class="abs chev" style="left:296px"  width="9" height="6" viewBox="0 0 9 6"><path d="M1 1l3.5 3.5L8 1" fill="none" stroke="#fff" stroke-width="1.3"/></svg>
 <div class="abs nvt" style="left:337px">Task Manager</div>
 <div class="abs nvt" style="left:456px">Dashboard</div><svg class="abs chev" style="left:529px"  width="9" height="6" viewBox="0 0 9 6"><path d="M1 1l3.5 3.5L8 1" fill="none" stroke="#fff" stroke-width="1.3"/></svg>
 <div class="abs nvt" style="left:570px;transform:scaleX(.955);transform-origin:left">Create Case</div><svg class="abs chev" style="left:650px"  width="9" height="6" viewBox="0 0 9 6"><path d="M1 1l3.5 3.5L8 1" fill="none" stroke="#fff" stroke-width="1.3"/></svg>
 <div class="abs nvt" style="left:691px;transform:scaleX(.95);transform-origin:left">Events</div>
 <div class="abs" style="left:729px;top:6px;width:17px;height:14.6px;background:#f99b45;border-radius:2px;color:#fff;font-size:11px;font-weight:700;line-height:14.6px;text-align:center">1</div>
 <div class="abs" style="left:730px;top:20.5px;width:0;height:0;border-left:2.5px solid transparent;border-right:2.5px solid transparent;border-top:3px solid #f99b45"></div>
 <div class="abs nvt" style="left:764px;transform:scaleX(.962);transform-origin:left">Enquiry Search</div>
 <div class="abs nvt" style="left:889px">Reports</div><svg class="abs chev" style="left:940px"  width="9" height="6" viewBox="0 0 9 6"><path d="M1 1l3.5 3.5L8 1" fill="none" stroke="#fff" stroke-width="1.3"/></svg>
 <div class="abs nvt" style="left:980px">Users</div><svg class="abs chev" style="left:1021px"  width="9" height="6" viewBox="0 0 9 6"><path d="M1 1l3.5 3.5L8 1" fill="none" stroke="#fff" stroke-width="1.3"/></svg>
 <div class="abs nvt" style="left:1061px">Other</div><svg class="abs chev" style="left:1100px"  width="9" height="6" viewBox="0 0 9 6"><path d="M1 1l3.5 3.5L8 1" fill="none" stroke="#fff" stroke-width="1.3"/></svg>
 <div class="abs" style="left:1515px;top:16px;width:184px;height:28px;background:#fff;border-radius:4px"></div>
 <div class="abs" style="left:1527px;top:22.7px;font-size:13px;line-height:16px;color:#949494;transform:scaleX(.95);transform-origin:left">Search...</div>
 <svg class="abs" style="left:1667px;top:20px" width="20" height="20" viewBox="0 0 20 20"><circle cx="8.5" cy="8.2" r="5.8" fill="none" stroke="#2c3e50" stroke-width="2.4"/><path d="M12.8 12.5l4.5 4.5" stroke="#2c3e50" stroke-width="2.6" stroke-linecap="round"/></svg>
 <svg class="abs" style="left:1728px;top:5px" width="50" height="50" viewBox="0 0 50 50">
  <circle cx="25" cy="25" r="24.6" fill="#fff" stroke="#d5e6e6" stroke-width=".9"/>
  <circle cx="25" cy="25" r="23.3" fill="none" stroke="#cfe5e2" stroke-width=".6"/>
  <clipPath id="avc"><circle cx="25" cy="25" r="22.8"/></clipPath>
  <g clip-path="url(#avc)">
   <path d="M12.5 48C13 42.8 18 40 25 40s12 2.8 12.5 8z" fill="#f7931e"/>
   <rect x="22" y="34" width="5.6" height="7" fill="#f3c08f"/>
   <path d="M11.6 28.5C10.2 14 15.5 7 25 7s14.8 7 13.4 21.5z" fill="#5a3825"/>
   <ellipse cx="12" cy="28.3" rx="1.9" ry="2.8" fill="#f3c08f"/><ellipse cx="38" cy="28.3" rx="1.9" ry="2.8" fill="#f3c08f"/>
   <path d="M13.7 19h22v7c0 6.5-4.7 10.4-11 10.4s-11-3.9-11-10.4z" fill="#f9cf9b"/>
   <path d="M13 22.5C12.3 13 17 8.6 25 8.6s12.7 4.4 12 13.9c-2-2.6-4-3.4-7-3.2-2.5.2-4.5-.6-6 .2-2.5 1.3-6 .2-8 .6-1.6.4-2.4 1.4-3 2.4z" fill="#5a3825"/>
   <circle cx="18.8" cy="25.8" r="1.5" fill="#3a2518"/><circle cx="30.6" cy="25.8" r="1.5" fill="#3a2518"/>
   <path d="M17 21.8h4M28.4 21.8h4" stroke="#5a3825" stroke-width="1.1"/>
   <path d="M22.8 33.1h3.6" stroke="#eaa48a" stroke-width=".9"/>
  </g>
 </svg>
 <div class="abs" style="left:1786px;top:14px;font-size:14px;line-height:16px;color:#fff;white-space:nowrap;-webkit-text-stroke:.3px #fff">Shefali Agent</div>
 <div class="abs" style="left:1786px;top:30px;font-size:13px;line-height:15px;color:#fff;-webkit-text-stroke:.3px #fff">Agents</div>
 <div class="abs" style="left:1879px;top:21px;width:0;height:0;border-left:4px solid transparent;border-right:4px solid transparent;border-top:5px solid #fff"></div>
</div>
<div id="sb" class="abs">
 <div class="abs" style="left:4px;top:7px;width:0;height:0;border-left:4px solid transparent;border-right:4px solid transparent;border-bottom:4px solid #505050"></div>
 <div class="abs" style="left:2px;top:474px;width:13px;height:446px;background:#c1c1c1"></div>
</div>
</body></html>
